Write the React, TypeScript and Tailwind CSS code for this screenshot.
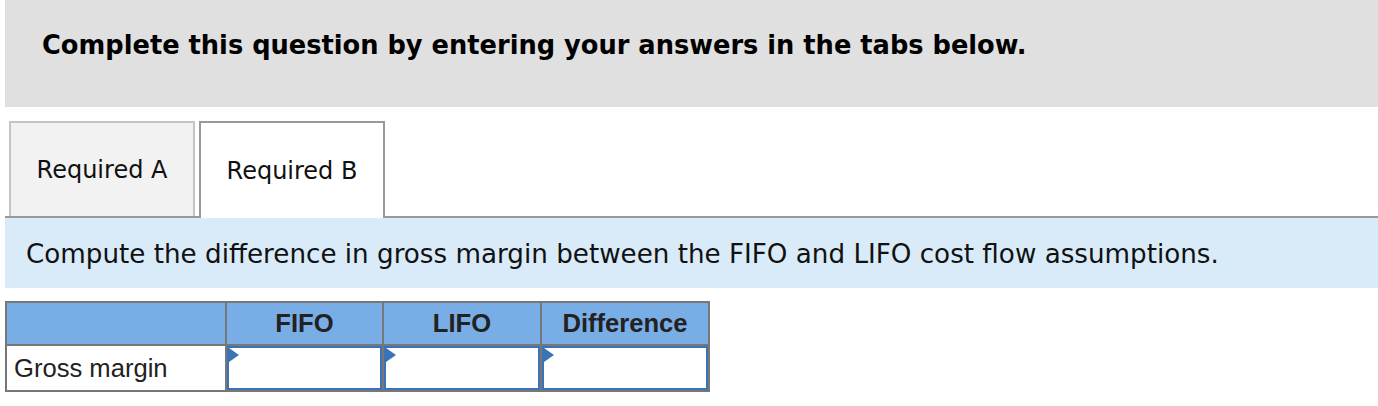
import React from 'react';

const verdana = { fontFamily: '"DejaVu Sans", Verdana, sans-serif' };

const Flag: React.FC = () => (
  <svg className="absolute left-0 top-0" width="10" height="14" viewBox="0 0 10 14">
    <polygon points="0,0 10,7 0,14" fill="#3b73b9" />
  </svg>
);

const InputCell: React.FC<{ width: string }> = ({ width }) => (
  <div className={`${width} h-[46px] border-r-2 border-b-2 border-[#777]`}>
    <div className="relative h-full w-full border-2 border-[#3b73b9] bg-white">
      <Flag />
    </div>
  </div>
);

const App: React.FC = () => {
  const cols = ['w-[157px]', 'w-[158px]', 'w-[168px]'];
  const heads = ['FIFO', 'LIFO', 'Difference'];

  return (
    <div className="min-h-[406px] w-[1378px] bg-white">
      <div className="ml-[5px] flex h-[107px] items-center bg-[#e0e0e0] pl-[37px] pb-[16px]">
        <h1 className="whitespace-nowrap text-[25.7px] font-bold text-black" style={verdana}>
          Complete this question by entering your answers in the tabs below.
        </h1>
      </div>

      <div className="ml-[5px] mt-[14px] flex h-[97px] gap-[4px] border-b-2 border-[#999] pl-[4px]">
        <button
          className="flex h-[95px] w-[186px] items-center justify-center border-2 border-b-0 border-[#c4c4c4] bg-[#f2f2f2] text-[24px] text-[#111]"
          style={verdana}
        >
          Required A
        </button>
        <button
          className="-mb-[2px] flex h-[97px] w-[186px] items-center justify-center border-2 border-b-0 border-[#999] bg-white text-[24px] text-[#111]"
          style={verdana}
        >
          Required B
        </button>
      </div>

      <div className="ml-[5px] flex h-[70px] items-center bg-[#d9ebf9] pl-[21px] pt-[3px]">
        <p className="whitespace-nowrap text-[26.2px] text-[#111]" style={verdana}>
          Compute the difference in gross margin between the FIFO and LIFO cost flow assumptions.
        </p>
      </div>

      <div
        className="ml-[5px] mt-[13px] w-[705px] border-t-2 border-l-2 border-[#777] text-[#222]"
        style={{ fontFamily: '"Liberation Sans", Arial, sans-serif' }}
      >
        <div className="flex">
          <div className="h-[43px] w-[220px] border-r-2 border-b-2 border-[#777] bg-[#79ade5]" />
          {heads.map((h, i) => (
            <div
              key={h}
              className={`${cols[i]} flex h-[43px] items-center justify-center border-r-2 border-b-2 border-[#777] bg-[#79ade5] text-[25.6px] font-bold`}
            >
              {h}
            </div>
          ))}
        </div>
        <div className="flex">
          <div className="flex h-[46px] w-[220px] items-center border-r-2 border-b-2 border-[#777] pl-[7px] text-[25.6px]">
            Gross margin
          </div>
          {cols.map((c) => (
            <InputCell key={c} width={c} />
          ))}
        </div>
      </div>
    </div>
  );
};

export default App;
